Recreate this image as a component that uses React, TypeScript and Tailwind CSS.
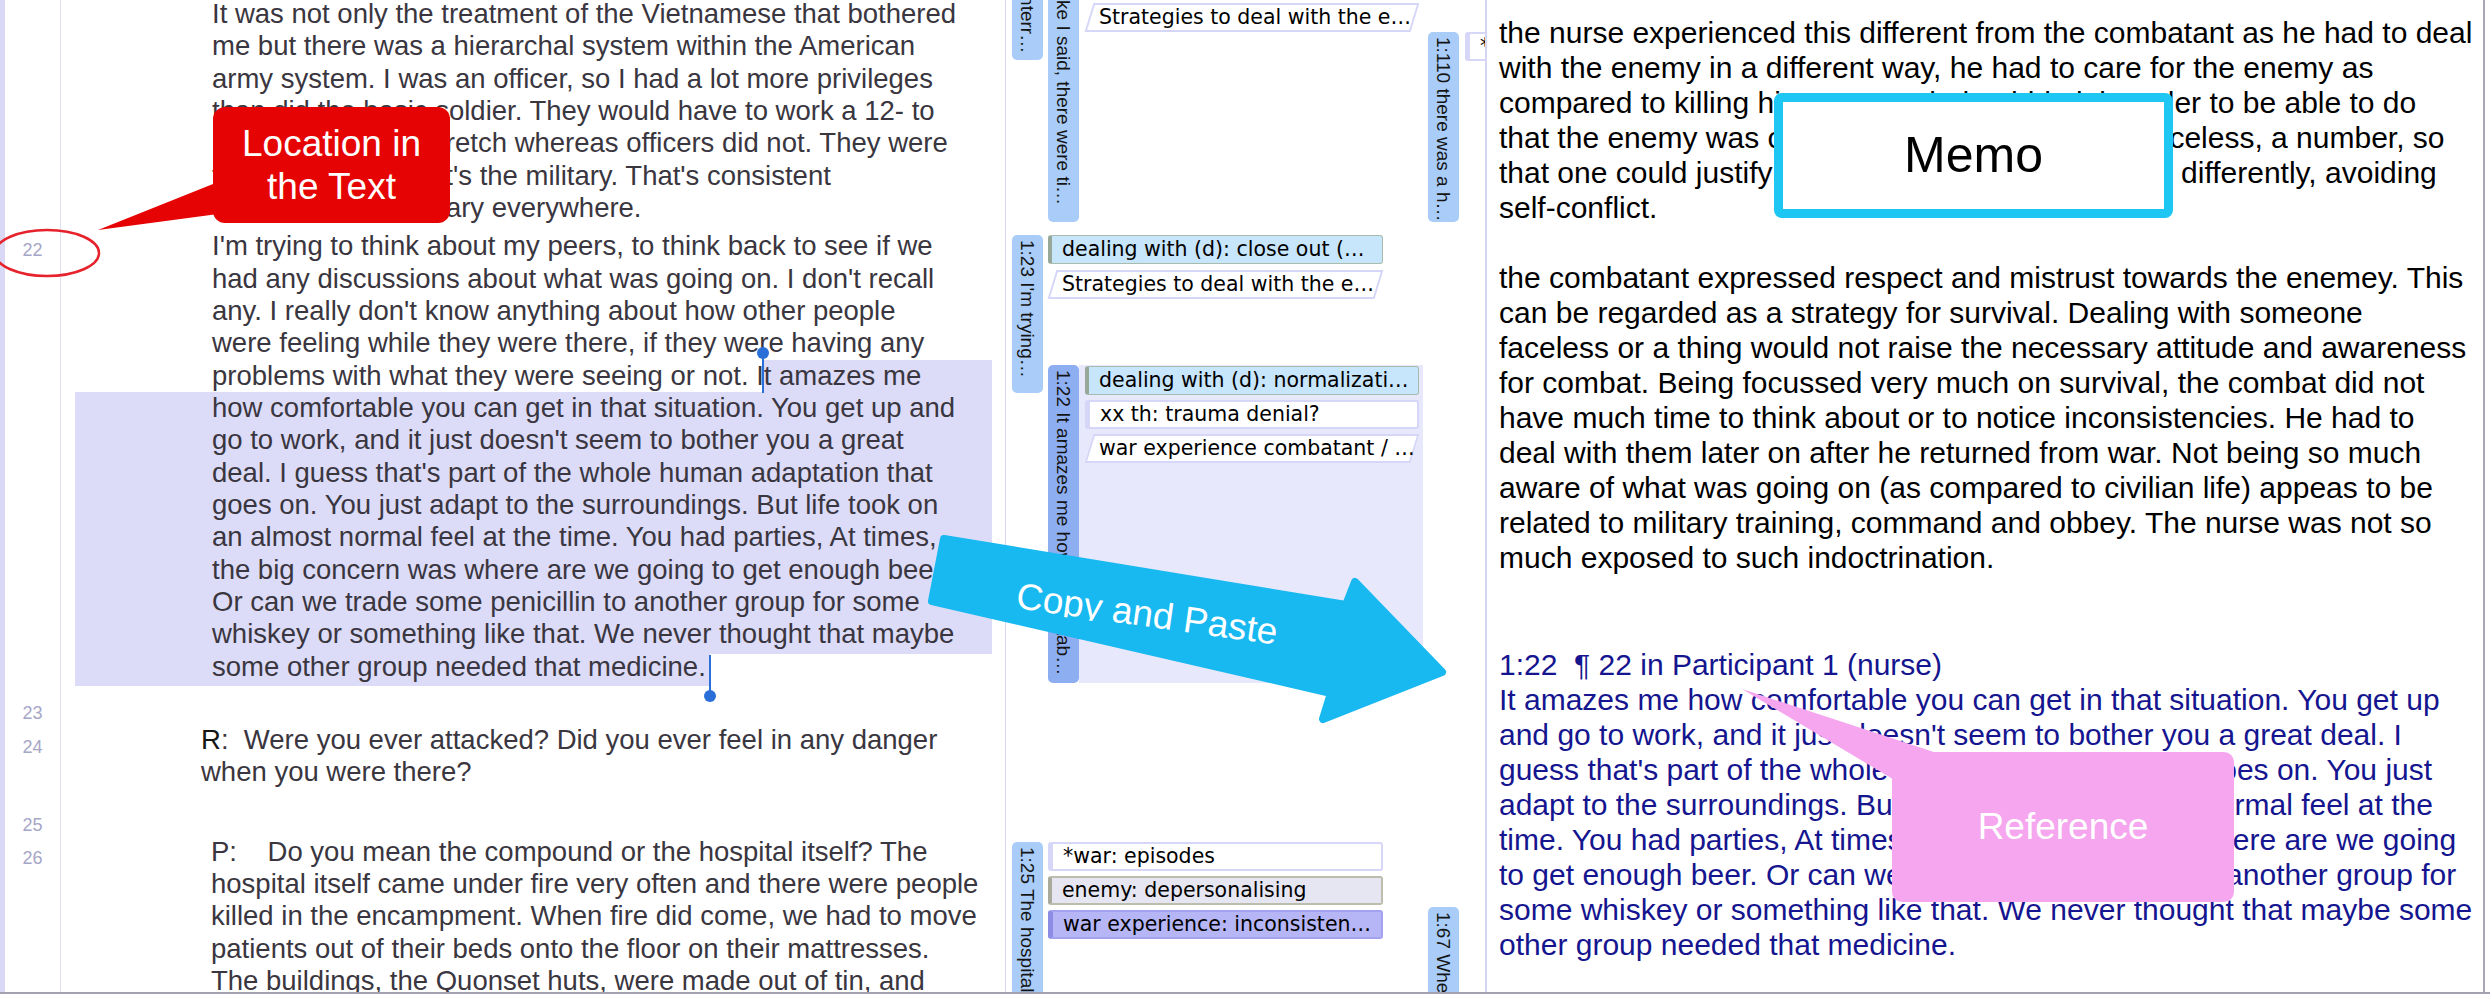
import React from 'react';

const p1 = [
  'It was not only the treatment of the Vietnamese that bothered',
  'me but there was a hierarchal system within the American',
  'army system. I was an officer, so I had a lot more privileges',
  'than did the basic soldier. They would have to work a 12- to',
  '16-hour shift in a stretch whereas officers did not. They were',
  "treated unfairly, that's the military. That's consistent",
  'throughout the military everywhere.',
];

const p2 = [
  "I'm trying to think about my peers, to think back to see if we",
  "had any discussions about what was going on. I don't recall",
  "any. I really don't know anything about how other people",
  'were feeling while they were there, if they were having any',
  'problems with what they were seeing or not. It amazes me',
  'how comfortable you can get in that situation. You get up and',
  "go to work, and it just doesn't seem to bother you a great",
  "deal. I guess that's part of the whole human adaptation that",
  'goes on. You just adapt to the surroundings. But life took on',
  'an almost normal feel at the time. You had parties, At times,',
  'the big concern was where are we going to get enough beer.',
  'Or can we trade some penicillin to another group for some',
  'whiskey or something like that. We never thought that maybe',
  'some other group needed that medicine.',
];

const pAnswer = [
  'hospital itself came under fire very often and there were people',
  'killed in the encampment. When fire did come, we had to move',
  'patients out of their beds onto the floor on their mattresses.',
  'The buildings, the Quonset huts, were made out of tin, and',
];

const memo1 = [
  'the nurse experienced this different from the combatant as he had to deal',
  'with the enemy in a different way, he had to care for the enemy as',
  'compared to killing him. He needed to hide it in order to be able to do',
  'that the enemy was considered to be something faceless, a number, so',
  'that one could justify killing them and treating them differently, avoiding',
  'self-conflict.',
];

const memo2 = [
  'the combatant expressed respect and mistrust towards the enemey. This',
  'can be regarded as a strategy for survival. Dealing with someone',
  'faceless or a thing would not raise the necessary attitude and awareness',
  'for combat. Being focussed very much on survival, the combat did not',
  'have much time to think about or to notice inconsistencies. He had to',
  'deal with them later on after he returned from war. Not being so much',
  'aware of what was going on (as compared to civilian life) appeas to be',
  'related to military training, command and obbey. The nurse was not so',
  'much exposed to such indoctrination.',
];

const quote = [
  'It amazes me how comfortable you can get in that situation. You get up',
  "and go to work, and it just doesn't seem to bother you a great deal. I",
  "guess that's part of the whole human adaptation that goes on. You just",
  'adapt to the surroundings. But life took on an almost normal feel at the',
  'time. You had parties, At times, the big concern was where are we going',
  'to get enough beer. Or can we trade some penicillin to another group for',
  'some whiskey or something like that. We never thought that maybe some',
  'other group needed that medicine.',
];

function Lines({ lines }: { lines: string[] }) {
  return (
    <>
      {lines.map((l, i) => (
        <div key={i}>{l}</div>
      ))}
    </>
  );
}

function QuoteBar({ className, text, dark }: { className: string; text: string; dark?: boolean }) {
  return (
    <div
      className={`absolute flex w-[31px] justify-center overflow-hidden rounded-[5px] pt-[5px] ${
        dark ? 'bg-[#8eaef2]' : 'bg-[#a9cdf8]'
      } ${className}`}
    >
      <span className="whitespace-nowrap font-['Liberation_Sans',Arial,sans-serif] text-[19px] leading-[31px] text-[#141414] [writing-mode:vertical-rl]">
        {text}
      </span>
    </div>
  );
}

type Kind = 'blue' | 'plain' | 'gray' | 'violet' | 'slant';

const kinds: Record<Exclude<Kind, 'slant'>, string> = {
  blue: 'rounded-[3px] border-[1.5px] border-l-[4px] border-[#a8bcae] border-l-[#97a898] bg-[#c7e5fb]',
  plain: 'rounded-[3px] border-2 border-l-[5px] border-[#d6d6f8] bg-white',
  gray: 'rounded-[3px] border-2 border-l-[4px] border-[#bdbdae] border-l-[#aaaa9c] bg-[#e6e6f2]',
  violet: 'rounded-[3px] border-2 border-l-[5px] border-[#a2a2ee] border-l-[#8c8ce4] bg-[#b6b6f6]',
};

function Code({ kind, label, className = '' }: { kind: Kind; label: string; className?: string }) {
  const text = "whitespace-nowrap font-['DejaVu_Sans',Verdana,sans-serif] text-[20.5px] leading-none text-black";
  if (kind === 'slant') {
    return (
      <div className={`relative flex h-[29px] items-center pl-[14px] ${className}`}>
        <div className="absolute inset-y-0 left-[4px] right-[4px] -skew-x-[17deg] border-2 border-[#d6d6f8] bg-white" />
        <span className={`relative ${text}`}>{label}</span>
      </div>
    );
  }
  return (
    <div className={`flex h-[29px] items-center overflow-hidden pl-[10px] ${kinds[kind]} ${className}`}>
      <span className={text}>{label}</span>
    </div>
  );
}

export default function App() {
  return (
    <div className="relative h-[998px] w-[2490px] overflow-hidden bg-white font-['Liberation_Sans',Arial,sans-serif]">
      <div className="flex h-[994px] border-b-2 border-[#a2a2b2]">
        {/* left edge */}
        <div className="w-[5px] shrink-0 bg-[#d9d9f6]" />

        {/* line numbers */}
        <div className="flex w-[56px] shrink-0 flex-col items-center border-r border-[#e2e2f6] text-[18px] leading-[24px] text-[#a6a6c6]">
          <div className="mt-[238px]">22</div>
          <div className="mt-[439px]">23</div>
          <div className="mt-[10px]">24</div>
          <div className="mt-[54px]">25</div>
          <div className="mt-[9px]">26</div>
        </div>

        {/* document text */}
        <div className="relative w-[944px] shrink-0 overflow-hidden">
          {/* selection */}
          <div className="absolute left-[701px] top-[360px] h-[32px] w-[230px] bg-[#dcdcf8]" />
          <div className="absolute left-[14px] top-[392px] h-[262px] w-[917px] bg-[#dcdcf8]" />
          <div className="absolute left-[14px] top-[654px] h-[32px] w-[635px] bg-[#dcdcf8]" />

          <div className="relative whitespace-pre pl-[151px] text-[27.5px] leading-[32.33px] text-[#3a3640]">
            <div className="-mt-[2px]">
              <Lines lines={p1} />
            </div>
            <div className="mt-[6px]">
              <Lines lines={p2} />
            </div>
            <div className="-ml-[11px] mt-[41px]">
              <div>
                <span className="text-[#151515]">R</span>:  Were you ever attacked? Did you ever feel in any danger
              </div>
              <div>when you were there?</div>
            </div>
            <div className="-ml-[1px] mt-[47px]">
              <div>P:    Do you mean the compound or the hospital itself? The</div>
              <Lines lines={pAnswer} />
            </div>
          </div>

          {/* selection handles */}
          <div className="absolute left-[696px] top-[347px] h-[12px] w-[12px] rounded-full bg-[#2a6fd8]" />
          <div className="absolute left-[701px] top-[353px] h-[40px] w-[2px] bg-[#2a6fd8]" />
          <div className="absolute left-[648px] top-[655px] h-[38px] w-[2px] bg-[#2a6fd8]" />
          <div className="absolute left-[643px] top-[690px] h-[12px] w-[12px] rounded-full bg-[#2a6fd8]" />
        </div>

        {/* margin area: quotations and codes aligned to their text lines */}
        <div className="relative w-[482px] shrink-0 overflow-hidden border-l border-r-2 border-[#d6d6f4]">
          <div className="absolute left-[73px] top-[365px] h-[318px] w-[344px] bg-[#e8e8fc]" />

          <QuoteBar className="left-[6px] top-[-150px] h-[210px]" text="1:21 They were interr…" />
          <QuoteBar className="left-[42px] top-[-62px] h-[284px]" text="1:20 Like I said, there were ti…" />
          <QuoteBar className="left-[422px] top-[32px] h-[190px]" text="1:110 there was a h…" />
          <QuoteBar className="left-[6px] top-[235px] h-[158px]" text="1:23 I'm trying…" />
          <QuoteBar className="left-[42px] top-[365px] h-[318px]" text="1:22 It amazes me how comfortab…" dark />
          <QuoteBar className="left-[6px] top-[842px] h-[200px]" text="1:25 The hospital itself…" />
          <QuoteBar className="left-[422px] top-[907px] h-[200px]" text="1:67 When fire did…" />

          <div className="absolute left-[79px] top-[3px] w-[334px]">
            <Code kind="slant" label="Strategies to deal with the e…" />
          </div>
          <div className="absolute left-[459px] top-[32px] w-[200px]">
            <Code kind="plain" label="*war: episodes" />
          </div>
          <div className="absolute left-[42px] top-[235px] flex w-[335px] flex-col gap-[6px]">
            <Code kind="blue" label="dealing with (d): close out (…" />
            <Code kind="slant" label="Strategies to deal with the e…" />
          </div>
          <div className="absolute left-[79px] top-[366px] flex w-[334px] flex-col gap-[5px]">
            <Code kind="blue" label="dealing with (d): normalizati…" />
            <Code kind="plain" label="xx th: trauma denial?" />
            <Code kind="slant" label="war experience combatant / …" />
          </div>
          <div className="absolute left-[42px] top-[842px] flex w-[335px] flex-col gap-[5px]">
            <Code kind="plain" label="*war: episodes" />
            <Code kind="gray" label="enemy: depersonalising" />
            <Code kind="violet" label="war experience: inconsisten…" />
          </div>
        </div>

        {/* memo */}
        <div className="w-[998px] shrink-0 whitespace-pre border-r-2 border-[#a8a8b8] pl-[12px] pt-[15px] text-[30px] leading-[35px] text-black">
          <Lines lines={memo1} />
          <div className="mt-[35px]">
            <Lines lines={memo2} />
          </div>
          <div className="mt-[72px] text-[#15158f]">
            <div>1:22  ¶ 22 in Participant 1 (nurse)</div>
            <Lines lines={quote} />
          </div>
        </div>
      </div>

      {/* annotations */}
      <svg className="pointer-events-none absolute left-0 top-0" width="2490" height="998" viewBox="0 0 2490 998">
        <ellipse cx="47" cy="253" rx="52" ry="23" fill="none" stroke="#e6222c" strokeWidth="2.5" />
        <polygon points="218,182 98,230 218,214" fill="#e60303" />
        <polygon
          points="944,539 1346,605 1355,582 1442,672 1323,719 1331,693 932,601"
          fill="#18b8f1"
          stroke="#18b8f1"
          strokeWidth="8"
          strokeLinejoin="round"
        />
        <defs>
          <clipPath id="copyClip">
            <rect x="1000" y="570" width="300" height="40" />
          </clipPath>
        </defs>
        <text
          x="1015"
          y="608"
          transform="rotate(8 1015 608)"
          clipPath="url(#copyClip)"
          fill="white"
          fontSize="37"
          fontFamily="'Liberation Sans', Arial, sans-serif"
        >
          Copy and Paste
        </text>
        <polygon points="1946,756 1742,689 1896,781" fill="#f5a6ee" />
      </svg>

      <div className="absolute left-[213px] top-[107px] flex h-[116px] w-[237px] items-center justify-center rounded-[12px] bg-[#e60303] text-center text-[37px] leading-[43px] text-white">
        Location in
        <br />
        the Text
      </div>

      <div className="absolute left-[1774px] top-[93px] flex h-[125px] w-[399px] items-center justify-center rounded-[8px] border-[9px] border-[#1ec6f4] bg-white text-[50px] text-black">
        Memo
      </div>

      <div className="absolute left-[1892px] top-[752px] flex h-[150px] w-[342px] items-center justify-center rounded-[10px] bg-[#f5a6ee] text-[37px] text-white">
        Reference
      </div>
    </div>
  );
}
